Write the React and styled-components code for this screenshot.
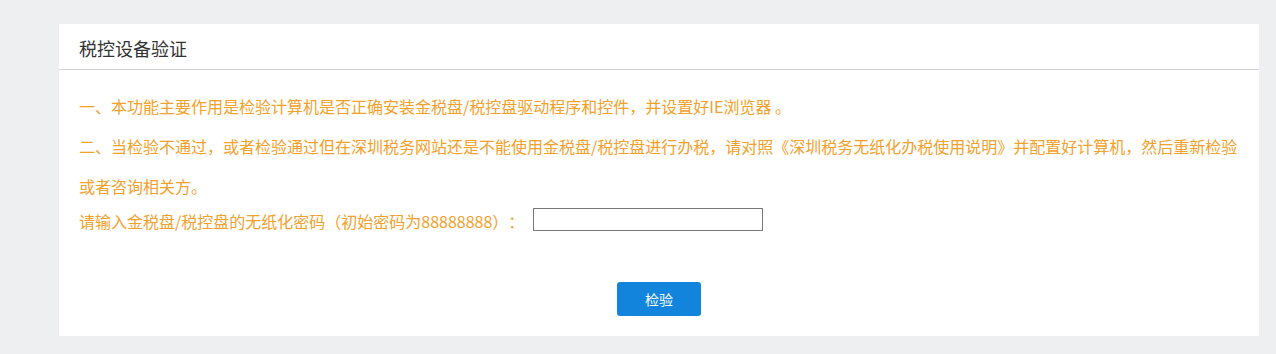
import React from "react";
import styled, { createGlobalStyle } from "styled-components";

const Global = createGlobalStyle`
  html, body { margin: 0; padding: 0; background: #eeeff1; }
  body {
    font-family: "Microsoft YaHei", "Noto Sans CJK SC", "Noto Sans", sans-serif;
    text-spacing-trim: space-all;
  }
`;

const Page = styled.div`
  padding: 24px 17px 18px 59px;
`;

const Card = styled.section`
  background: #ffffff;
  height: 312px;
  display: flex;
  flex-direction: column;
`;

const Header = styled.header`
  box-sizing: border-box;
  height: 46px;
  border-bottom: 1px solid #d2d2d2;
  display: flex;
  align-items: center;
  padding: 2px 0 0 20px;
  font-size: 18px;
  color: #333333;
`;

const Body = styled.div`
  padding: 16px 20px 0 20px;
  color: #f2a12b;
  font-size: 16px;
`;

const Para = styled.p`
  margin: 0;
  line-height: 40px;
`;

const FormRow = styled.div`
  display: flex;
  align-items: flex-start;
  margin-top: 2px;
`;

const Label = styled.span`
  line-height: 20px;
  padding-top: 3px;
`;

const Input = styled.input`
  box-sizing: border-box;
  width: 230px;
  height: 23px;
  border: 1px solid #777777;
  margin: 0 0 0 9px;
  padding: 0 4px;
  outline: none;
`;

const Actions = styled.div`
  display: flex;
  justify-content: center;
  margin-top: 51px;
`;

const Button = styled.button`
  width: 84px;
  height: 34px;
  border: none;
  border-radius: 3px;
  background: #1384dc;
  color: #ffffff;
  font-family: inherit;
  font-size: 14px;
  cursor: pointer;
`;

export default function App() {
  return (
    <>
      <Global />
      <Page>
        <Card>
          <Header>税控设备验证</Header>
          <Body>
            <Para>一、本功能主要作用是检验计算机是否正确安装金税盘/税控盘驱动程序和控件，并设置好IE浏览器 。</Para>
            <Para>
              二、当检验不通过，或者检验通过但在深圳税务网站还是不能使用金税盘/税控盘进行办税，请对照《深圳税务无纸化办税使用说明》并配置好计算机，然后重新检验或者咨询相关方。
            </Para>
            <FormRow>
              <Label>请输入金税盘/税控盘的无纸化密码（初始密码为88888888）：</Label>
              <Input type="password" />
            </FormRow>
            <Actions>
              <Button>检验</Button>
            </Actions>
          </Body>
        </Card>
      </Page>
    </>
  );
}
